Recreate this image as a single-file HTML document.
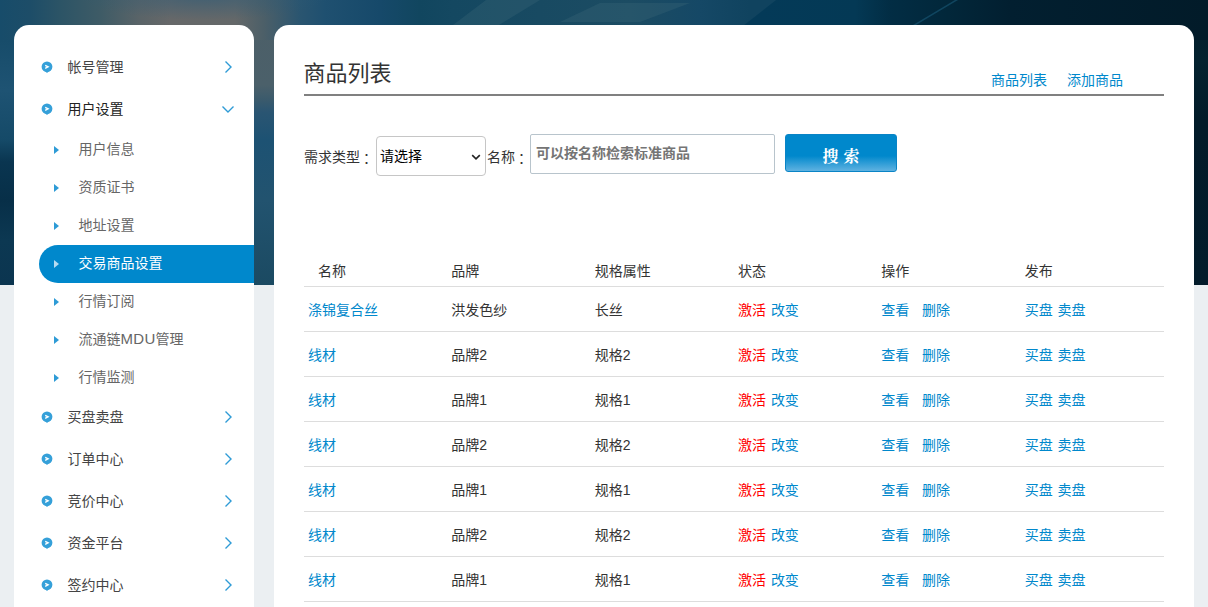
<!DOCTYPE html>
<html lang="zh-CN">
<head>
<meta charset="utf-8">
<title>商品列表</title>
<style>
*{box-sizing:border-box;margin:0;padding:0}
html,body{width:1208px;height:607px;overflow:hidden}
body{font-family:"Liberation Sans","Noto Sans CJK SC",sans-serif;font-size:14px;color:#333;background:#ebeff2;position:relative}
a{text-decoration:none;color:#0088cc}
.banner{position:absolute;left:0;top:0;width:1208px;height:285px;overflow:hidden;background:#0f3c58}
.banner svg{display:block}
.side{position:absolute;left:14px;top:25px;width:240px;height:600px;background:#fff;border-radius:15px 15px 0 0}
.main{position:absolute;left:274px;top:25px;width:920px;height:600px;background:#fff;border-radius:15px 15px 0 0}
.m1{position:absolute;left:0;width:240px;height:42px;line-height:42px;color:#444;font-size:14px}
.m1 .t{position:absolute;left:53.5px;top:0}
.m1 .dot{position:absolute;left:27px;top:15.3px;width:12px;height:12px}
.m1 .chev{position:absolute;left:206px;top:13.4px;width:16px;height:16px}
.m2{position:absolute;left:25px;width:215px;height:38px;line-height:38px;color:#666;font-size:14px}
.m2 .t{position:absolute;left:39.5px;top:0}
.m2 .tri{position:absolute;left:15px;top:15.5px;width:0;height:0;border-left:5px solid #2e9bd6;border-top:4px solid transparent;border-bottom:4px solid transparent}
.m2.on{background:#0088cc;color:#fff;border-radius:19px 0 0 19px}
.m2.on{margin-top:1px}
.m2.on .t{top:-1px}
.m2.on .tri{border-left-color:#b5dbf1;top:14.5px}
h1{position:absolute;left:29.5px;top:33px;font-size:22px;font-weight:normal;color:#333;line-height:32px}
.hr{position:absolute;left:30px;top:69px;width:860px;height:2px;background:#808080}
.tabs{position:absolute;top:45px;left:717px;font-size:14px;line-height:20px;white-space:nowrap}
.tabs a{position:absolute;top:0}
.lbl{position:absolute;font-size:14px;line-height:20px;color:#333;white-space:nowrap}
.sel{position:absolute;left:102px;top:111px;width:110px;height:40px;border:1px solid #c6c6c6;border-radius:4px;background:#fff;font-size:14px;color:#000;line-height:38px;padding-left:3px}
.inp{position:absolute;left:256px;top:109px;width:245px;height:40px;border:1px solid #b8c4cc;border-radius:2px;background:#fff;font-size:14px;color:#757575;line-height:36px;padding-left:5px;font-weight:bold}
.btn{position:absolute;left:511px;top:109px;width:112px;height:38px;border-radius:3px;border:1px solid #0a84c6;background:linear-gradient(180deg,#0088cc 0,#0088cc 58%,#5fb2e1 100%);color:#fff;font-family:"Liberation Serif","Noto Serif CJK SC",serif;font-weight:bold;font-size:16px;line-height:44px;text-align:center;word-spacing:1px}
table{position:absolute;left:30px;top:231px;width:860px;border-collapse:collapse;table-layout:fixed}
th{font-weight:normal;text-align:left;height:30px;line-height:20px;padding:0 0 0 4px;color:#333;border-bottom:1px solid #ddd;font-size:14px}
td{height:45px;line-height:20px;padding:2px 0 0 4px;border-bottom:1px solid #ddd;font-size:14px;color:#333;white-space:nowrap}
.red{color:#f00}
.co{position:relative;left:3px;top:1px}
td *+a{margin-left:1px}
</style>
</head>
<body>
<div class="banner"><svg width="1208" height="285" viewBox="0 0 1208 285">
<defs>
<linearGradient id="gt" x1="0" y1="0" x2="1208" y2="0" gradientUnits="userSpaceOnUse"><stop offset="0.0000" stop-color="#174c6a"/><stop offset="0.0248" stop-color="#1d4d68"/><stop offset="0.0497" stop-color="#2c5466"/><stop offset="0.0828" stop-color="#3e5b66"/><stop offset="0.1159" stop-color="#5a6468"/><stop offset="0.1407" stop-color="#666869"/><stop offset="0.1945" stop-color="#646869"/><stop offset="0.2185" stop-color="#4c5f68"/><stop offset="0.2483" stop-color="#2a5570"/><stop offset="0.2690" stop-color="#1f5070"/><stop offset="0.3146" stop-color="#16496a"/><stop offset="0.3477" stop-color="#11465f"/><stop offset="0.3742" stop-color="#144861"/><stop offset="0.4470" stop-color="#184a62"/><stop offset="0.5215" stop-color="#1c4c63"/><stop offset="0.5795" stop-color="#154866"/><stop offset="0.6209" stop-color="#10435f"/><stop offset="1.0000" stop-color="#10435f"/></linearGradient>
<linearGradient id="gg" x1="0" y1="25" x2="0" y2="285" gradientUnits="userSpaceOnUse"><stop offset="0.0000" stop-color="#4c5f68"/><stop offset="0.2308" stop-color="#4b606a"/><stop offset="0.2885" stop-color="#3a5a6c"/><stop offset="0.3346" stop-color="#2a5572"/><stop offset="0.4423" stop-color="#1d5273"/><stop offset="0.6731" stop-color="#22536f"/><stop offset="1.0000" stop-color="#1b4a62"/></linearGradient>
<linearGradient id="gl" x1="0" y1="0" x2="0" y2="285" gradientUnits="userSpaceOnUse"><stop offset="0.0000" stop-color="#174c6a"/><stop offset="0.1404" stop-color="#174c6a"/><stop offset="0.3158" stop-color="#1e5373"/><stop offset="0.4912" stop-color="#154a68"/><stop offset="0.5684" stop-color="#0a3550"/><stop offset="0.7018" stop-color="#072f48"/><stop offset="0.8421" stop-color="#0c3852"/><stop offset="1.0000" stop-color="#0b3550"/></linearGradient>
<linearGradient id="gr" x1="0" y1="0" x2="0" y2="285" gradientUnits="userSpaceOnUse"><stop offset="0.0000" stop-color="#021b29"/><stop offset="0.2105" stop-color="#04222f"/><stop offset="0.4211" stop-color="#021b29"/><stop offset="1.0000" stop-color="#031c2b"/></linearGradient>
<linearGradient id="dk" x1="760" y1="0" x2="1208" y2="0" gradientUnits="userSpaceOnUse"><stop offset="0.0000" stop-color="#043a58"/><stop offset="0.2121" stop-color="#043955"/><stop offset="0.2902" stop-color="#022d44"/><stop offset="0.4196" stop-color="#02273a"/><stop offset="0.5580" stop-color="#021f30"/><stop offset="1.0000" stop-color="#021b29"/></linearGradient>
<radialGradient id="tb" cx="205" cy="-4" r="1" gradientUnits="userSpaceOnUse" gradientTransform="translate(205 -4) scale(125 24) translate(-205 4)"><stop offset="0" stop-color="#2a5a78" stop-opacity="0.6"/><stop offset="1" stop-color="#2a5a78" stop-opacity="0"/></radialGradient>
</defs>
<rect x="0" y="40" width="134" height="245" fill="url(#gl)"/>
<rect x="134" y="40" width="500" height="245" fill="url(#gg)"/>
<rect x="1000" y="40" width="208" height="245" fill="url(#gr)"/>
<rect x="0" y="0" width="1208" height="40" fill="url(#gt)"/>
<polygon points="453,25 486,0 540,0 499,25" fill="#3f6a7c" opacity="0.3"/>
<polygon points="560,22 600,3 690,3 640,22" fill="#3f6a7c" opacity="0.3"/>
<polygon points="776,0 1208,0 1208,40 725,40" fill="url(#dk)"/>
<polygon points="913,25 955,0 958,0 916,25" fill="#1a5a78" opacity="0.6"/>
<rect x="60" y="0" width="300" height="26" fill="url(#tb)"/>
</svg></div>
<div class="side" id="side">
<div class="m1" style="top:21px"><svg class="dot" viewBox="0 0 12 12"><circle cx="6" cy="5.8" r="5.4" fill="#35a0d9"/><path d="M4.6 10.6 L6 12 L7.4 10.6Z" fill="#35a0d9"/><path d="M4.2 4.3 L7.1 5.8 L4.2 7.3" fill="none" stroke="#fff" stroke-width="1.35"/></svg><span class="t">帐号管理</span><svg class="chev" viewBox="0 0 16 16"><path d="M5.5 2.5 L11 8 L5.5 13.5" fill="none" stroke="#2e9bd6" stroke-width="1.4"/></svg></div>
<div class="m1" style="top:63px"><svg class="dot" viewBox="0 0 12 12"><circle cx="6" cy="5.8" r="5.4" fill="#35a0d9"/><path d="M4.6 10.6 L6 12 L7.4 10.6Z" fill="#35a0d9"/><path d="M4.2 4.3 L7.1 5.8 L4.2 7.3" fill="none" stroke="#fff" stroke-width="1.35"/></svg><span class="t" style="color:#222">用户设置</span><svg class="chev" viewBox="0 0 16 16"><path d="M2.5 5.5 L8 11 L13.5 5.5" fill="none" stroke="#2e9bd6" stroke-width="1.4"/></svg></div>
<div class="m2" style="top:105px"><i class="tri"></i><span class="t">用户信息</span></div>
<div class="m2" style="top:143px"><i class="tri"></i><span class="t">资质证书</span></div>
<div class="m2" style="top:181px"><i class="tri"></i><span class="t">地址设置</span></div>
<div class="m2 on" style="top:219px"><i class="tri"></i><span class="t">交易商品设置</span></div>
<div class="m2" style="top:257px"><i class="tri"></i><span class="t">行情订阅</span></div>
<div class="m2" style="top:295px"><i class="tri"></i><span class="t">流通链<span style="font-size:15px;letter-spacing:.3px">MDU</span>管理</span></div>
<div class="m2" style="top:333px"><i class="tri"></i><span class="t">行情监测</span></div>
<div class="m1" style="top:371px"><svg class="dot" viewBox="0 0 12 12"><circle cx="6" cy="5.8" r="5.4" fill="#35a0d9"/><path d="M4.6 10.6 L6 12 L7.4 10.6Z" fill="#35a0d9"/><path d="M4.2 4.3 L7.1 5.8 L4.2 7.3" fill="none" stroke="#fff" stroke-width="1.35"/></svg><span class="t">买盘卖盘</span><svg class="chev" viewBox="0 0 16 16"><path d="M5.5 2.5 L11 8 L5.5 13.5" fill="none" stroke="#2e9bd6" stroke-width="1.4"/></svg></div>
<div class="m1" style="top:413px"><svg class="dot" viewBox="0 0 12 12"><circle cx="6" cy="5.8" r="5.4" fill="#35a0d9"/><path d="M4.6 10.6 L6 12 L7.4 10.6Z" fill="#35a0d9"/><path d="M4.2 4.3 L7.1 5.8 L4.2 7.3" fill="none" stroke="#fff" stroke-width="1.35"/></svg><span class="t">订单中心</span><svg class="chev" viewBox="0 0 16 16"><path d="M5.5 2.5 L11 8 L5.5 13.5" fill="none" stroke="#2e9bd6" stroke-width="1.4"/></svg></div>
<div class="m1" style="top:455px"><svg class="dot" viewBox="0 0 12 12"><circle cx="6" cy="5.8" r="5.4" fill="#35a0d9"/><path d="M4.6 10.6 L6 12 L7.4 10.6Z" fill="#35a0d9"/><path d="M4.2 4.3 L7.1 5.8 L4.2 7.3" fill="none" stroke="#fff" stroke-width="1.35"/></svg><span class="t">竞价中心</span><svg class="chev" viewBox="0 0 16 16"><path d="M5.5 2.5 L11 8 L5.5 13.5" fill="none" stroke="#2e9bd6" stroke-width="1.4"/></svg></div>
<div class="m1" style="top:497px"><svg class="dot" viewBox="0 0 12 12"><circle cx="6" cy="5.8" r="5.4" fill="#35a0d9"/><path d="M4.6 10.6 L6 12 L7.4 10.6Z" fill="#35a0d9"/><path d="M4.2 4.3 L7.1 5.8 L4.2 7.3" fill="none" stroke="#fff" stroke-width="1.35"/></svg><span class="t">资金平台</span><svg class="chev" viewBox="0 0 16 16"><path d="M5.5 2.5 L11 8 L5.5 13.5" fill="none" stroke="#2e9bd6" stroke-width="1.4"/></svg></div>
<div class="m1" style="top:539px"><svg class="dot" viewBox="0 0 12 12"><circle cx="6" cy="5.8" r="5.4" fill="#35a0d9"/><path d="M4.6 10.6 L6 12 L7.4 10.6Z" fill="#35a0d9"/><path d="M4.2 4.3 L7.1 5.8 L4.2 7.3" fill="none" stroke="#fff" stroke-width="1.35"/></svg><span class="t">签约中心</span><svg class="chev" viewBox="0 0 16 16"><path d="M5.5 2.5 L11 8 L5.5 13.5" fill="none" stroke="#2e9bd6" stroke-width="1.4"/></svg></div>
</div>
<div class="main">
<h1>商品列表</h1>
<div class="tabs"><a style="left:0">商品列表</a><a style="left:76px">添加商品</a></div>
<div class="hr"></div>
<div class="lbl" style="left:30px;top:122px">需求类型<span class="co">：</span></div>
<div class="sel">请选择<svg style="position:absolute;right:3px;top:13.5px" width="12" height="12" viewBox="0 0 12 12"><path d="M2.2 4.1 L6 7.8 L9.8 4.1" fill="none" stroke="#222" stroke-width="1.6"/></svg></div>
<div class="lbl" style="left:213px;top:122px">名称<span class="co">：</span></div>
<div class="inp">可以按名称检索标准商品</div>
<div class="btn">搜 索</div>
<table>
<tr><th style="padding-left:14px">名称</th><th>品牌</th><th>规格属性</th><th>状态</th><th>操作</th><th>发布</th></tr>
<tr><td><a>涤锦复合丝</a></td><td>洪发色纱</td><td>长丝</td><td><span class="red">激活</span> <a>改变</a></td><td><a>查看</a> &nbsp; <a>删除</a></td><td><a>买盘</a> <a>卖盘</a></td></tr>
<tr><td><a>线材</a></td><td>品牌2</td><td>规格2</td><td><span class="red">激活</span> <a>改变</a></td><td><a>查看</a> &nbsp; <a>删除</a></td><td><a>买盘</a> <a>卖盘</a></td></tr>
<tr><td><a>线材</a></td><td>品牌1</td><td>规格1</td><td><span class="red">激活</span> <a>改变</a></td><td><a>查看</a> &nbsp; <a>删除</a></td><td><a>买盘</a> <a>卖盘</a></td></tr>
<tr><td><a>线材</a></td><td>品牌2</td><td>规格2</td><td><span class="red">激活</span> <a>改变</a></td><td><a>查看</a> &nbsp; <a>删除</a></td><td><a>买盘</a> <a>卖盘</a></td></tr>
<tr><td><a>线材</a></td><td>品牌1</td><td>规格1</td><td><span class="red">激活</span> <a>改变</a></td><td><a>查看</a> &nbsp; <a>删除</a></td><td><a>买盘</a> <a>卖盘</a></td></tr>
<tr><td><a>线材</a></td><td>品牌2</td><td>规格2</td><td><span class="red">激活</span> <a>改变</a></td><td><a>查看</a> &nbsp; <a>删除</a></td><td><a>买盘</a> <a>卖盘</a></td></tr>
<tr><td><a>线材</a></td><td>品牌1</td><td>规格1</td><td><span class="red">激活</span> <a>改变</a></td><td><a>查看</a> &nbsp; <a>删除</a></td><td><a>买盘</a> <a>卖盘</a></td></tr>
</table>
</div>
</body>
</html>
